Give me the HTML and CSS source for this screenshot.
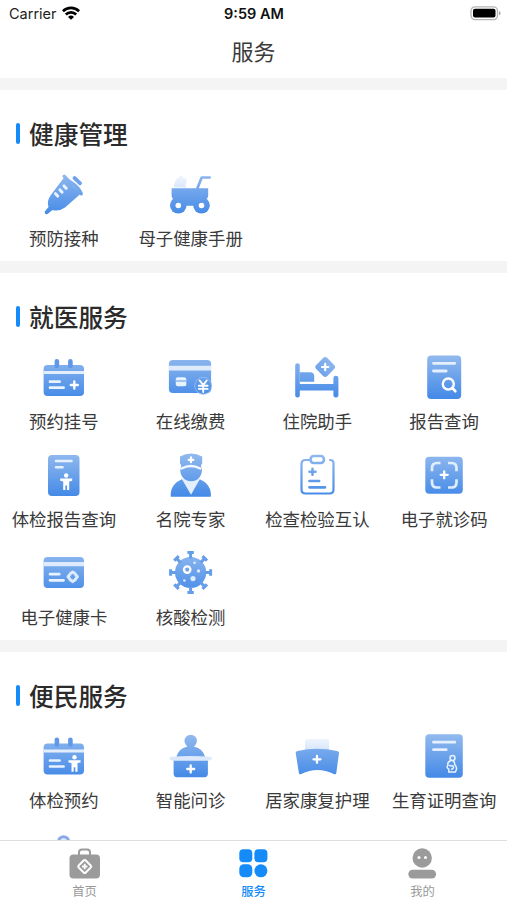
FILE: index.html
```html
<!DOCTYPE html>
<html lang="zh-CN">
<head>
<meta charset="utf-8">
<title>服务</title>
<link rel="stylesheet" href="styles.css">
</head>
<body>
<svg class="defs" width="0" height="0" aria-hidden="true">
  <defs>
    <linearGradient id="g" gradientUnits="userSpaceOnUse" x1="0" y1="3" x2="0" y2="45"><stop offset="0" stop-color="#8fb8ee"/><stop offset="1" stop-color="#4389e7"/></linearGradient>
    <linearGradient id="pale" gradientUnits="userSpaceOnUse" x1="0" y1="3" x2="0" y2="20"><stop offset="0" stop-color="#f3f7fe"/><stop offset="1" stop-color="#d3e3fa"/></linearGradient>
    <symbol id="person" viewBox="0 0 14 18"><circle cx="7" cy="2.5" r="2.2"/><path d="M1 5.5h12v2.3l-3 .6V17H7.8v-4.5H6.2V17H4V8.400L1 7.800z"/></symbol>
  </defs>
</svg>
<div class="screen">
  <header class="status">
    <div class="carrier"><span>Carrier</span>
      <svg width="18" height="14" viewBox="0 0 18 14" fill="none" stroke="#000" stroke-width="2.700"><path d="M.9 5.200a11.500 11.500 0 0 1 16.200 0M3.800 8.500a7.400 7.400 0 0 1 10.400 0"/><path d="M9 13.800 6 10.900a4.300 4.300 0 0 1 6 0z" fill="#000" stroke="none"/></svg>
    </div>
    <div class="time">9:59 AM</div>
    <div class="battery"><svg width="31" height="15" viewBox="0 0 31 15"><rect x="1" y=".8" width="26.500" height="12.800" rx="4" fill="#fff" stroke="#b5b5b5" stroke-width="1.300"/><rect x="3" y="2.800" width="22.500" height="8.800" rx="2" fill="#000"/><path d="M29 5v4.500q1.600-.8 1.600-2.200T29 5z" fill="#aaa"/></svg></div>
  </header>
  <h1 class="title">服务</h1>
  <main class="content">
    <section class="group">
      <h2>健康管理</h2>
      <div class="grid">
        <div class="item"><svg viewBox="0 0 48 48" fill="url(#g)"><path d="M25.500 6 42 22.500 26 36.500q-6.500 4.500-12.500 2.500L8.500 43q-1.500.5-2.500-.5-.7-1 0-2.300l3.500-4.200q-2-6 2-11.500z"/><path d="M25.200 5.300Q28 9 33.500 12.500T42.300 22.700" fill="none" stroke="url(#g)" stroke-width="3.400" stroke-linecap="round"/><path d="m35.500 7 5.600 5.300" stroke="#6fa3eb" stroke-width="3.800" stroke-linecap="round"/><path d="m16.500 22.700 2.200 2.400m2.200-6.300 2.200 2.400m1.900-6.300 2.200 2.400" stroke="#e9f2ff" stroke-width="3" stroke-linecap="round"/></svg><span>预防接种</span></div>
        <div class="item"><svg viewBox="0 0 48 48" fill="url(#g)"><path fill="url(#pale)" d="M8 16.500q-.5-7 5-10.500l3-2 1.500 3.500h3q.5 5-1.500 7l2 2z"/><path d="M5.600 17.300h36.600v7q0 3.500-3.500 4.500l-3 6H12l-3-6q-3.400-1-3.400-4.500z"/><path d="m31.500 17 4.200-10.500h8" fill="none" stroke="url(#g)" stroke-width="2.700" stroke-linecap="round" stroke-linejoin="round"/><circle cx="12.300" cy="34.300" r="8.300"/><circle cx="35.500" cy="34.300" r="8.300"/><g fill="#fff"><circle cx="12.300" cy="34.500" r="2.800"/><circle cx="35.500" cy="34.500" r="2.800"/></g></svg><span>母子健康手册</span></div>
      </div>
    </section>
    <section class="group">
      <h2>就医服务</h2>
      <div class="grid">
        <div class="item"><svg viewBox="0 0 48 48" fill="url(#g)"><rect x="4.600" y="11" width="40.400" height="31" rx="4"/><path fill="#e3eefd" d="M4.600 17H45v3H4.600z"/><path d="M17.900 7.200v4.800m13.500-4.800v4.800" stroke="#5f98e8" stroke-width="4.600" stroke-linecap="round"/><path d="M11 27.700h9.600M11 33.700h13.600" stroke="#e9f2ff" stroke-width="2.700" stroke-linecap="round"/><path d="M35.300 27.500v7m-3.500-3.500h7" stroke="#fff" stroke-width="2.400" stroke-linecap="round"/></svg><span>预约挂号</span></div>
        <div class="item"><svg viewBox="0 0 48 48" fill="url(#g)"><rect x="2.900" y="6" width="42.200" height="33" rx="4"/><path fill="#deebfc" d="M2.900 11.700h42.200v4.700H2.900z"/><rect x="9.800" y="23.300" width="10.500" height="9" rx="2" fill="#e9f2ff"/><path d="M10 27h10" stroke="#71a4ec" stroke-width="1.200"/><circle cx="37.200" cy="31.800" r="8.500" stroke="#9cc2f4" stroke-width=".8"/><path d="m33.700 26.500 3.500 4.500 3.500-4.500M37.200 31v7M32.800 31.700h8.800m-8.800 3.200h8.800" fill="none" stroke="#fff" stroke-width="1.900" stroke-linecap="round"/></svg><span>在线缴费</span></div>
        <div class="item"><svg viewBox="0 0 48 48" fill="url(#g)"><g transform="translate(-.6 0)"><path d="M2.800 11.300q0-2 2.300-2t2.300 2V30H41v-6q0-2.300 2.500-2.300T46 24v17.500q0 2-2.500 2t-2.500-2v-5H7.400v5q0 2-2.300 2t-2.300-2z"/><path d="M7.400 18.300h10.400q4 0 4 4v5.400H7.400z"/><rect x="25" y="5.200" width="15.600" height="15.600" rx="3" transform="rotate(45 32.800 13)"/><path d="M32.800 9.800v6.400M29.600 13H36" stroke="#fff" stroke-width="2.200" stroke-linecap="round"/></g></svg><span>住院助手</span></div>
        <div class="item"><svg viewBox="0 0 48 48" fill="url(#g)"><rect x="7.200" y="1.500" width="34" height="43.500" rx="4"/><path d="M13.500 9.300h21.300M13.500 17h12.700" stroke="#e5effd" stroke-width="2.800" stroke-linecap="round"/><circle cx="28.300" cy="30" r="5.500" fill="none" stroke="#fff" stroke-width="2.400"/><path d="m32.300 34 3 3.200" stroke="#fff" stroke-width="2.700" stroke-linecap="round"/></svg><span>报告查询</span></div>
        <div class="item"><svg viewBox="0 0 48 48" fill="url(#g)"><rect x="9" y="3" width="31.500" height="41" rx="4"/><path d="M17 9h15.500M17 15.300h6.500" stroke="#e5effd" stroke-width="2.600" stroke-linecap="round"/><use href="#person" x="20.200" y="21" width="14" height="18" fill="#fff"/></svg><span>体检报告查询</span></div>
        <div class="item"><svg viewBox="0 0 48 48" fill="url(#g)"><path d="M4.800 44.700q-1-12 11-17.400h18q12 5.400 11 17.400z"/><path fill="#e4effd" d="M15.600 26.500h18.600L25 42.700z"/><path d="M14 4.500Q24.900-1.500 36.200 4.500v7q-2 1.500-.6 4.500a10.800 10.800 0 1 1-21 0q1.400-3-.6-4.500z"/><path d="M15.500 16.500q9.400-5 18.800 0" fill="none" stroke="#f3f8ff" stroke-width="2.300" stroke-linecap="round"/><path d="M25 5.400v4.800m-2.400-2.400h4.800" stroke="#fff" stroke-width="2.200" stroke-linecap="round"/></svg><span>名院专家</span></div>
        <div class="item"><svg viewBox="0 0 48 48" fill="none" stroke="url(#g)" stroke-width="2.200" stroke-linecap="round"><path d="M16.500 8h-4q-4 0-4 4v25.500q0 4 4 4h24q4 0 4-4V11q0-3-3.500-3"/><rect x="17.600" y="4" width="13.300" height="7" rx="3" stroke-width="2.600"/><path d="M19.500 16.700v6M16.500 19.700h6" stroke-width="2.600"/><path d="M16.500 29h9.600M16.500 35.300h15.500" stroke-width="2.700"/></svg><span>检查检验互认</span></div>
        <div class="item"><svg viewBox="0 0 48 48" fill="url(#g)"><rect x="5.300" y="4.700" width="37.500" height="37" rx="4"/><path d="M20.500 11H17q-5 0-5 5v3.200M28 11h3.500q5 0 5 5v3.200M20.500 35.500H17q-5 0-5-5v-3.200m16 8.200h3.500q5 0 5-5v-3.200" fill="none" stroke="#e0edff" stroke-width="2.700"/><path d="M24.200 19.300v7m-3.500-3.500h7" stroke="#fff" stroke-width="2.300" stroke-linecap="round"/></svg><span>电子就诊码</span></div>
        <div class="item"><svg viewBox="0 0 48 48" fill="url(#g)"><rect x="4.600" y="7" width="40.400" height="31" rx="4"/><path fill="#deebfc" d="M4.600 12H45v4.300H4.600z"/><path d="M11 24.200h9.300M11 30.300h13.600" stroke="#e9f2ff" stroke-width="2.700" stroke-linecap="round"/><path d="m31.500 23.500 2.200-1.500 2.200 1.500 1 1.500 1.500 1.800-1.500 1.800-1 1.500-2.200 1.500-2.200-1.500-1-1.500-1.500-1.800 1.500-1.800z" fill="none" stroke="#deebff" stroke-width="3" stroke-linejoin="round"/></svg><span>电子健康卡</span></div>
        <div class="item"><svg viewBox="0 0 48 48" fill="url(#g)"><circle cx="24.600" cy="22.500" r="15.600"/><g transform="translate(24.600 22.500)" stroke="#669de9" stroke-width="3" fill="none"><path id="spike" d="M0-14v-6M-3.200-20h6.400"/><use href="#spike" transform="rotate(45)"/><use href="#spike" transform="rotate(90)"/><use href="#spike" transform="rotate(135)"/><use href="#spike" transform="rotate(180)"/><use href="#spike" transform="rotate(225)"/><use href="#spike" transform="rotate(270)"/><use href="#spike" transform="rotate(315)"/></g><circle cx="21.200" cy="19.600" r="3.200" fill="#6ea2eb" stroke="#fff" stroke-width="2.300"/><g fill="#dcebff"><circle cx="28.600" cy="12.800" r="1.300"/><circle cx="32.500" cy="21" r="1.700"/><circle cx="27" cy="28.600" r="2.600"/><circle cx="18.400" cy="30.500" r="1.300"/></g></svg><span>核酸检测</span></div>
      </div>
    </section>
    <section class="group">
      <h2>便民服务</h2>
      <div class="grid">
        <div class="item"><svg viewBox="0 0 48 48" fill="url(#g)"><rect x="4.600" y="10.500" width="40.400" height="31" rx="4"/><path fill="#e3eefd" d="M4.600 16.500H45v3H4.600z"/><path d="M17.900 6.700v4.800m13.500-4.800v4.800" stroke="#5f98e8" stroke-width="4.600" stroke-linecap="round"/><path d="M11 27.500h9.600M11 33.500h13.600" stroke="#e9f2ff" stroke-width="2.700" stroke-linecap="round"/><use href="#person" x="28.500" y="21.700" width="14" height="18" fill="#fff"/></svg><span>体检预约</span></div>
        <div class="item"><svg viewBox="0 0 48 48" fill="url(#g)"><circle cx="24.700" cy="8" r="6.200"/><path d="M21 11h7.400l-.5 2.500q9.500 2 11.300 11h-29q1.800-9 11.300-11z"/><path d="M7.600 26h34.300v14.500q0 3.700-3.500 3.700H11q-3.400 0-3.400-3.700z"/><path fill="#dce9fc" d="M3.500 24q21-2 42.300 0v2.200q-2 1.500-5 1.500H8.500q-3 0-5-1.500z"/><path d="M24.700 32.500v7m-3.500-3.500h7" stroke="#fff" stroke-width="2.300" stroke-linecap="round"/></svg><span>智能问诊</span></div>
        <div class="item"><svg viewBox="0 0 48 48" fill="url(#g)"><path fill="url(#pale)" d="M12 20V8.500Q12 6 14.500 6h19Q36 6 36 8.500V20z"/><path d="M2.700 20Q2.500 18.500 4.500 18 24.200 13.500 44 18q2.200.5 2 2l-2.700 20q-.3 2-2.500 1-16.500-8-32.500 0-2 1-2.400-1z"/><path d="M24 22.800v7m-3.500-3.500h7" stroke="#fff" stroke-width="2.300" stroke-linecap="round"/></svg><span>居家康复护理</span></div>
        <div class="item"><svg viewBox="0 0 48 48" fill="url(#g)"><rect x="5.300" y="1.200" width="37.500" height="43.500" rx="4"/><path d="M13.500 9.200h21.300M13.500 16.700h12.700" stroke="#e5effd" stroke-width="2.800" stroke-linecap="round"/><g fill="none" stroke="#e9f2ff" stroke-width="1.500"><circle cx="32.500" cy="25" r="2.500"/><path d="M31 27.500q-4 1.500-3 4.500-2 2.500.8 4.200V39h6.400q3-4-.5-7.500 0-3-2-4M29 32.500l4 .5q1.500 2.500-2 3.500"/></g></svg><span>生育证明查询</span></div>
        <div class="item"><svg viewBox="0 0 48 48" fill="none"><circle cx="24.600" cy="10.700" r="5" fill="#e7edfd" stroke="#88abe8" stroke-width="3"/></svg></div>
      </div>
    </section>
  </main>
  <nav class="tabs">
    <div class="tab"><svg viewBox="0 0 32 32"><path d="M11 8V5.500Q11 2.500 14 2.500h5q3 0 3 3V8" fill="none" stroke="#9b9b9b" stroke-width="2"/><rect x="1.500" y="7.500" width="30.500" height="24" rx="4" fill="#9b9b9b"/><rect x="11.700" y="14.500" width="10" height="10" rx="1.500" transform="rotate(45 16.700 19.500)" fill="none" stroke="#fff" stroke-width="2"/><path d="M16.700 16.800v5.400M14 19.500h5.400" stroke="#fff" stroke-width="1.800"/></svg><span>首页</span></div>
    <div class="tab active"><svg viewBox="0 0 32 32" fill="#158bfa"><rect x="2.300" y="2.300" width="13" height="13" rx="4"/><rect x="17.400" y="2.300" width="13" height="13" rx="4"/><rect x="2.300" y="17.300" width="13" height="13" rx="4.500"/><circle cx="23.900" cy="23.800" r="6.500"/></svg><span>服务</span></div>
    <div class="tab"><svg viewBox="0 0 32 32" fill="#9b9b9b"><circle cx="16.200" cy="11" r="9.700"/><rect x="2.300" y="22.700" width="27.800" height="8.700" rx="4.300"/><g fill="#fff"><circle cx="13" cy="10.500" r="1.500"/><circle cx="19.500" cy="10.500" r="1.500"/></g></svg><span>我的</span></div>
  </nav>
</div>
</body>
</html>
```

FILE: styles.css
```css
* { box-sizing: border-box; }
body { margin: 0; background: #fff; color: #3a3a3a; font-family: "Noto Sans CJK SC", sans-serif; }
.defs { position: absolute; }
.screen { width: 507px; height: 900px; display: flex; flex-direction: column; overflow: hidden; }
.status { height: 28px; flex: none; display: grid; grid-template-columns: 1fr auto 1fr; align-items: center; padding: 0 6px 0 9px; font: 14.5px/28px Inter, sans-serif; color: #222; }
.carrier { display: flex; align-items: center; gap: 5px; }
.carrier svg { margin-top: -2px; }
.time { margin-right: 2px; font-size: 14.5px; font-weight: 600; color: #111; }
.battery { display: flex; justify-content: flex-end; }
.battery svg { margin-top: -1px; }
.title { flex: none; height: 50px; margin: 0; text-align: center; font-size: 22px; line-height: 45px; font-weight: 400; }
.content { flex: 1; min-height: 0; overflow: hidden; }
.group { border-top: 12px solid #f4f4f4; padding-top: 27px; }
.group h2 { display: flex; align-items: center; gap: 9.5px; height: 32px; margin: 0 0 22px; padding-left: 15.5px; font-size: 24.7px; line-height: 32px; font-weight: 500; color: #2b2b2b; }
.group h2::before { content: ""; width: 4px; height: 21px; border-radius: 2px; background: #158bfa; }
.grid { display: grid; grid-template-columns: repeat(4, 1fr); grid-auto-rows: 98px; margin-bottom: -8px; }
.item { display: flex; flex-direction: column; align-items: center; }
.item svg { width: 48px; height: 48px; }
.item span { margin-top: 6px; padding-left: 1px; font-size: 17.4px; line-height: 26px; white-space: nowrap; }
.tabs { flex: none; height: 60.5px; display: grid; grid-template-columns: repeat(3, 1fr); border-top: 1.5px solid #dedede; background: #fff; }
.tab { display: flex; flex-direction: column; align-items: center; padding-top: 6px; color: #999; font-size: 12.3px; }
.tab svg { width: 32px; height: 32px; margin-left: -1px; }
.tab span { line-height: 18px; margin-top: 3px; }
.tab.active { color: #158bfa; font-weight: 500; }
```
